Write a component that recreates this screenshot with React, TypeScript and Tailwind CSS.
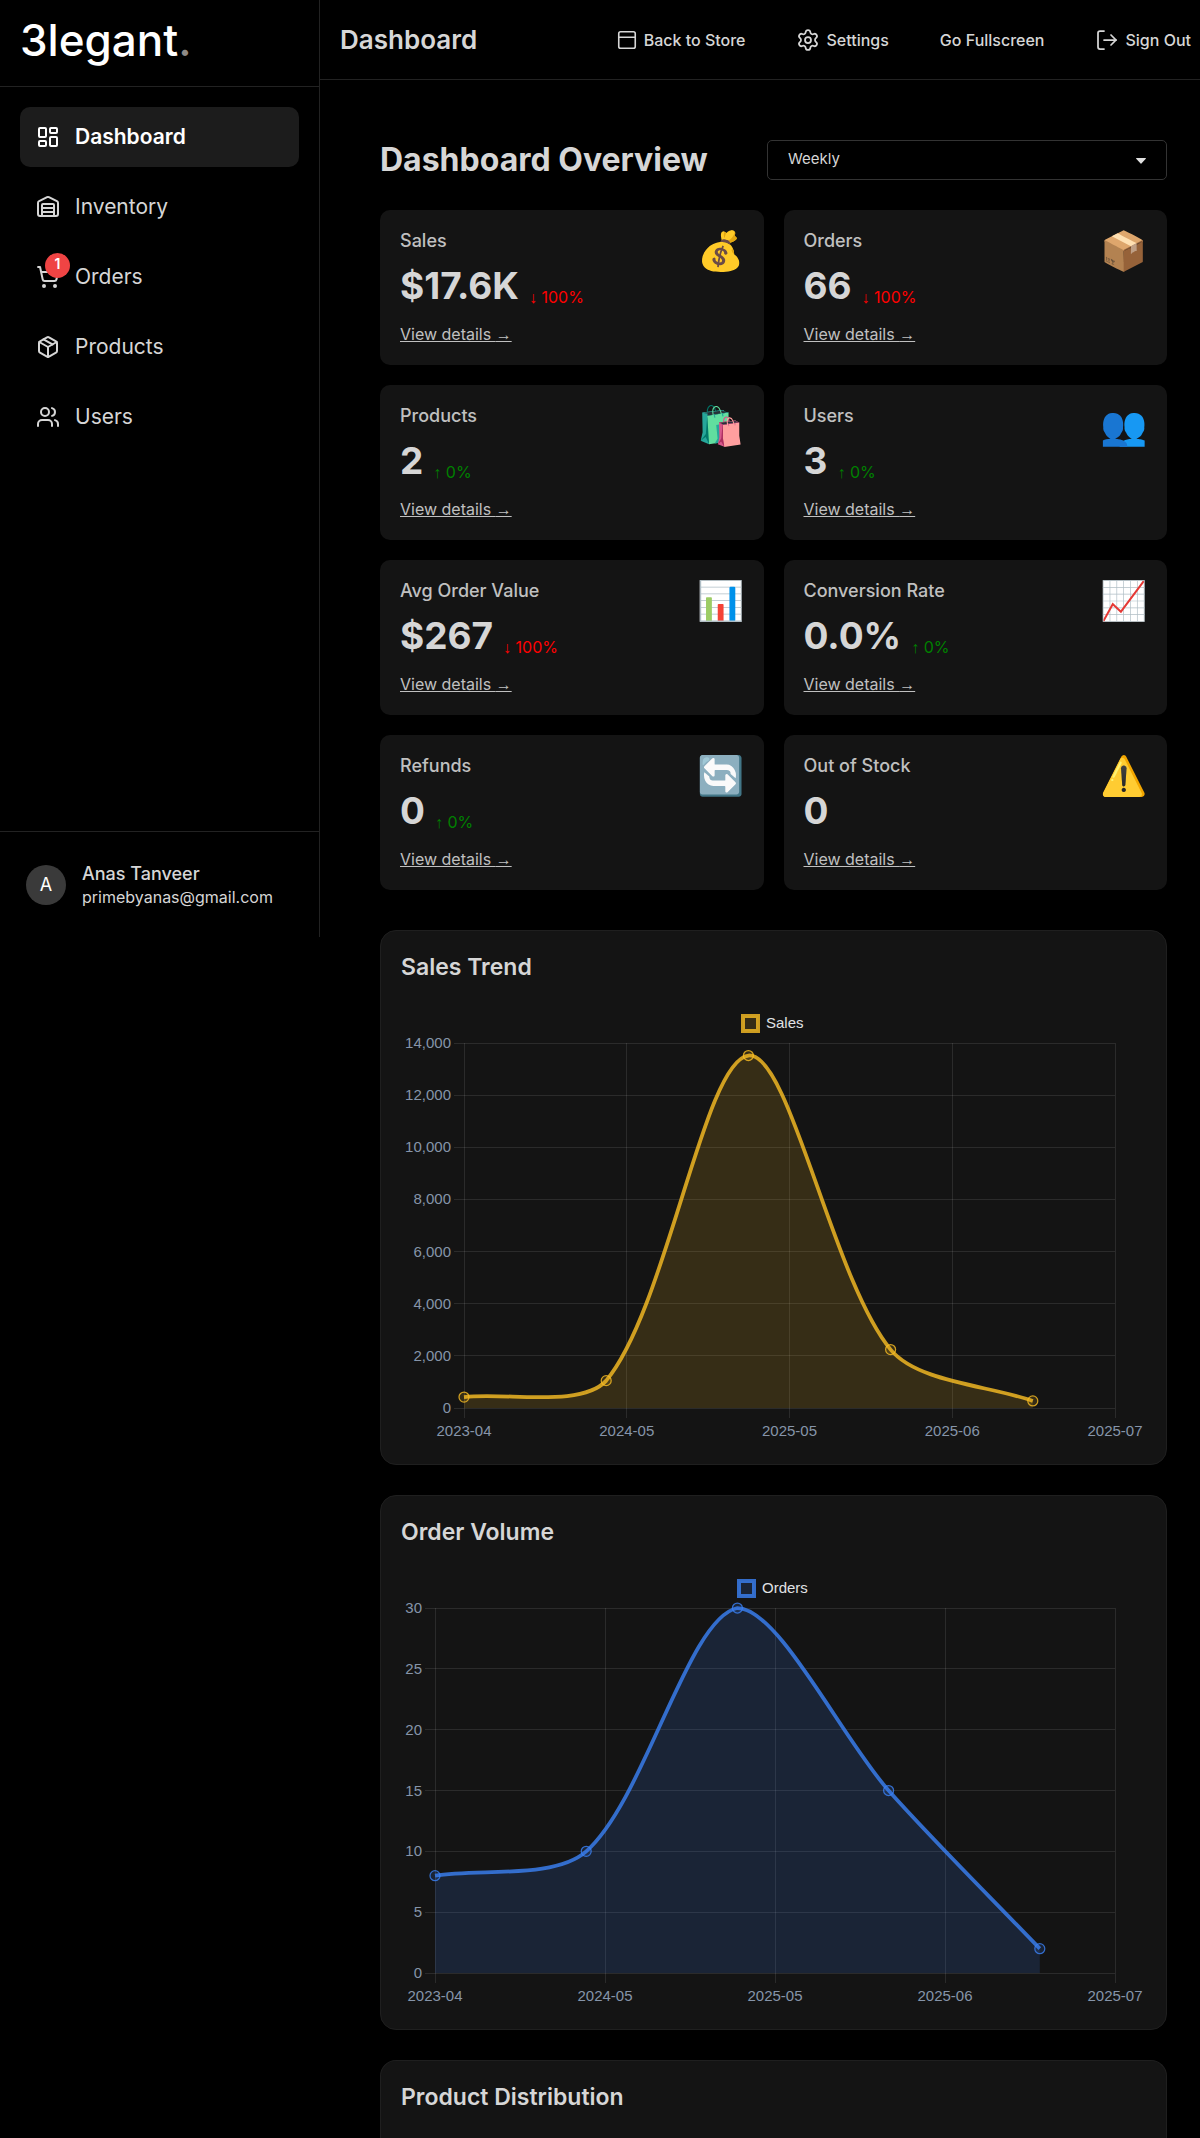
import React from "react";
import {
  LayoutDashboard,
  LogOut,
  Package,
  PanelTop,
  Settings,
  ShoppingCart,
  Users,
  Warehouse,
  type LucideIcon,
} from "lucide-react";

type NavItem = { label: string; icon: LucideIcon; active?: boolean; badge?: number };

const navItems: NavItem[] = [
  { label: "Dashboard", icon: LayoutDashboard, active: true },
  { label: "Inventory", icon: Warehouse },
  { label: "Orders", icon: ShoppingCart, badge: 1 },
  { label: "Products", icon: Package },
  { label: "Users", icon: Users },
];

type Stat = { title: string; value: string; emoji: string; change?: string; down?: boolean };

const stats: Stat[] = [
  { title: "Sales", value: "$17.6K", emoji: "💰", change: "100%", down: true },
  { title: "Orders", value: "66", emoji: "📦", change: "100%", down: true },
  { title: "Products", value: "2", emoji: "🛍️", change: "0%" },
  { title: "Users", value: "3", emoji: "👥", change: "0%" },
  { title: "Avg Order Value", value: "$267", emoji: "📊", change: "100%", down: true },
  { title: "Conversion Rate", value: "0.0%", emoji: "📈", change: "0%" },
  { title: "Refunds", value: "0", emoji: "🔄", change: "0%" },
  { title: "Out of Stock", value: "0", emoji: "⚠️" },
];

const dates = ["2023-04", "2024-05", "2025-05", "2025-06", "2025-07"];

function Sidebar() {
  return (
    <aside className="flex h-[937px] w-80 shrink-0 flex-col border-r border-[#222222]">
      <div className="flex h-[87px] items-center border-b border-[#222222] pb-1.5 pl-5 text-[44px] font-medium leading-[60px] text-white">
        <a href="#home">
          3legant<span className="text-[#8f8a86]">.</span>
        </a>
      </div>
      <nav className="flex flex-1 flex-col gap-[10px] p-5">
        {navItems.map(({ label, icon: Icon, active, badge }) => (
          <a
            key={label}
            href={"#" + label.toLowerCase()}
            className={
              active
                ? "flex h-[60px] items-center gap-[15px] rounded-[10px] bg-[#1c1c1c] px-4 text-[21px] font-semibold text-white"
                : "flex h-[60px] items-center gap-[15px] rounded-[10px] px-4 text-[21px] text-[#d6d6d6]"
            }
          >
            <span className="relative">
              <Icon size={24} />
              {badge ? (
                <span className="absolute -top-3 left-[9px] flex h-[25px] w-[25px] items-center justify-center rounded-full bg-[#ef4444] pb-1 text-[14px] font-semibold text-white">
                  {badge}
                </span>
              ) : null}
            </span>
            {label}
          </a>
        ))}
      </nav>
      <div className="flex h-[106px] items-center gap-4 border-t border-[#222222] pl-[26px]">
        <span className="flex h-10 w-10 items-center justify-center rounded-full bg-[#3a3a3a] text-[18px] text-white">
          A
        </span>
        <div>
          <p className="text-[18px] font-medium leading-6 text-[#d6d6d6]">Anas Tanveer</p>
          <p className="text-[16px] leading-[22px] text-[#d6d6d6]">primebyanas@gmail.com</p>
        </div>
      </div>
    </aside>
  );
}

function Header() {
  return (
    <header className="flex h-20 items-center justify-between border-b border-[#222222] pl-5 pr-[9px] text-[#d6d6d6]">
      <h1 className="text-[26px] font-semibold">Dashboard</h1>
      <div className="flex items-center gap-[51px] text-[16px] font-medium">
        <a href="#store" className="flex items-center gap-[6px]">
          <PanelTop size={22} strokeWidth={1.75} />
          Back to Store
        </a>
        <a href="#settings" className="flex items-center gap-[6px]">
          <Settings size={24} strokeWidth={1.75} />
          Settings
        </a>
        <button type="button">Go Fullscreen</button>
        <button type="button" className="flex items-center gap-[6px]">
          <LogOut size={24} strokeWidth={1.75} />
          Sign Out
        </button>
      </div>
    </header>
  );
}

function StatCard({ stat }: { stat: Stat }) {
  return (
    <article className="flex items-start justify-between rounded-[10px] bg-[#141414] p-5">
      <div>
        <h3 className="text-[18px] font-medium leading-[22px] text-[#c0c0c0]">{stat.title}</h3>
        <div className="mt-[10px] flex items-end gap-[10px]">
          <span className="text-[37px] font-bold leading-[48px] text-[#d6d6d6]">{stat.value}</span>
          {stat.change ? (
            <span className={stat.down ? "text-[16px] leading-[26px] text-[#ff0000]" : "text-[16px] leading-[26px] text-[#008000]"}>
              <span className="font-[Liberation_Serif] leading-none">{stat.down ? "↓" : "↑"}</span> {stat.change}
            </span>
          ) : null}
        </div>
        <a href="#details" className="mt-[13px] block text-[16px] leading-[22px] text-[#c0c0c0] underline">
          View details <span className="font-[Liberation_Serif] leading-none">→</span>
        </a>
      </div>
      <span className="text-[38px] leading-[40px]">{stat.emoji}</span>
    </article>
  );
}

type Point = { x: number; y: number };

// Cardinal spline whose control points are kept inside the plot area.
function splinePath(points: Point[], top: number, bottom: number) {
  const tension = 0.3;
  const clamp = (y: number) => Math.min(bottom, Math.max(top, y));
  const dist = (a: Point, b: Point) => Math.hypot(b.x - a.x, b.y - a.y);
  const controls = points.map((p, i) => {
    const prev = points[Math.max(0, i - 1)];
    const next = points[Math.min(points.length - 1, i + 1)];
    const d1 = dist(prev, p);
    const d2 = dist(p, next);
    const a = (tension * d1) / (d1 + d2);
    const b = (tension * d2) / (d1 + d2);
    return {
      before: { x: p.x - a * (next.x - prev.x), y: clamp(p.y - a * (next.y - prev.y)) },
      after: { x: p.x + b * (next.x - prev.x), y: clamp(p.y + b * (next.y - prev.y)) },
    };
  });
  return points
    .map((p, i) => {
      if (i === 0) return `M${p.x},${p.y}`;
      const c1 = controls[i - 1].after;
      const c2 = controls[i].before;
      return `C${c1.x},${c1.y} ${c2.x},${c2.y} ${p.x},${p.y}`;
    })
    .join(" ");
}

type ChartProps = {
  title: string;
  legend: string;
  legendX: number;
  color: string;
  left: number;
  step: number;
  pointStep: number;
  max: number;
  tick: number;
  values: number[];
};

function LineChart({ title, legend, legendX, color, left, step, pointStep, max, tick, values }: ChartProps) {
  const top = 59;
  const bottom = 424;
  const right = left + step * 4;
  const toY = (v: number) => bottom - (v / max) * (bottom - top);
  const points = values.map((v, i) => ({ x: left + i * pointStep, y: toY(v) }));
  const line = splinePath(points, top, bottom);
  const area = `${line} L${points[points.length - 1].x},${bottom} L${left},${bottom} Z`;
  const ticks = Array.from({ length: max / tick + 1 }, (_, i) => i * tick);
  return (
    <section className="rounded-2xl border border-[#1f1f1f] bg-[#141414] p-5">
      <h2 className="text-[23px] font-semibold leading-[33px] text-[#d6d6d6]">{title}</h2>
      <svg
        viewBox="0 0 745 460"
        className="block h-auto w-full font-[Liberation_Sans,Arial,sans-serif] text-[15px]"
        role="img"
        aria-label={title}
      >
        <rect x={legendX + 2} y={32} width={15} height={15} fill={color} fillOpacity={0.15} stroke={color} strokeOpacity={0.8} strokeWidth={4} />
        <text x={legendX + 25} y={44} fill="#e0e2e5">
          {legend}
        </text>
        <g stroke="#ffffff" strokeOpacity={0.1} shapeRendering="crispEdges">
          {ticks.map((t) => (
            <line key={t} x1={left - 10} x2={right} y1={toY(t)} y2={toY(t)} />
          ))}
          {dates.map((d, i) => (
            <line key={d} x1={left + i * step} x2={left + i * step} y1={top} y2={bottom + 10} />
          ))}
        </g>
        <g fill="#8694a9">
          {ticks.map((t) => (
            <text key={t} x={left - 13} y={toY(t) + 5} textAnchor="end">
              {t.toLocaleString("en-US")}
            </text>
          ))}
          {dates.map((d, i) => (
            <text key={d} x={left + i * step} y={452} textAnchor="middle">
              {d}
            </text>
          ))}
        </g>
        <path d={area} fill={color} fillOpacity={0.15} />
        <path d={line} fill="none" stroke={color} strokeOpacity={0.8} strokeWidth={3.75} />
        {points.map((p, i) => (
          <circle key={i} cx={p.x} cy={p.y} r={5} fill={color} fillOpacity={0.15} stroke={color} strokeOpacity={0.8} strokeWidth={1.25} />
        ))}
      </svg>
    </section>
  );
}

export default function App() {
  return (
    <div className="flex min-h-screen items-start bg-black font-[Inter,sans-serif]">
      <Sidebar />
      <div className="flex min-h-screen min-w-0 flex-1 flex-col">
        <Header />
        <main className="flex flex-1 flex-col pl-[60px] pr-[33px] pt-[60px]">
          <div className="flex h-10 items-center justify-between">
            <h2 className="text-[32px] font-bold leading-10 text-[#d6d6d6]">Dashboard Overview</h2>
            <div className="relative w-[400px]">
              <select
                aria-label="Period"
                defaultValue="Weekly"
                className="h-10 w-full appearance-none rounded-[5px] border border-[#333333] bg-black pb-0.5 pl-5 pr-10 text-[15px] text-[#d6d6d6]"
              >
                <option>Daily</option>
                <option>Weekly</option>
                <option>Monthly</option>
                <option>Yearly</option>
              </select>
              <svg viewBox="0 0 10 6" className="pointer-events-none absolute right-[21px] top-[18px] h-[6px] w-[10px] fill-[#e0e0e0]">
                <path d="M0.5 0h9a.5.5 0 0 1 .3.8L5.4 5.6a.5.5 0 0 1-.8 0L.2.8A.5.5 0 0 1 .5 0z" />
              </svg>
            </div>
          </div>
          <div className="mt-[30px] grid grid-cols-2 gap-5">
            {stats.map((s) => (
              <StatCard key={s.title} stat={s} />
            ))}
          </div>
          <div className="mt-10 flex flex-1 flex-col gap-[30px]">
            <LineChart
              title="Sales Trend"
              legend="Sales"
              legendX={340}
              color="#fbbf24"
              left={63}
              step={162.75}
              pointStep={142.2}
              max={14000}
              tick={2000}
              values={[420, 1050, 13520, 2240, 270]}
            />
            <LineChart
              title="Order Volume"
              legend="Orders"
              legendX={336}
              color="#3b82f6"
              left={34}
              step={170}
              pointStep={151.2}
              max={30}
              tick={5}
              values={[8, 10, 30, 15, 2]}
            />
            <section className="flex-1 rounded-t-2xl border border-b-0 border-[#1f1f1f] bg-[#141414] px-5 pt-5">
              <h2 className="text-[23px] font-semibold leading-[33px] text-[#d6d6d6]">Product Distribution</h2>
            </section>
          </div>
        </main>
      </div>
    </div>
  );
}
